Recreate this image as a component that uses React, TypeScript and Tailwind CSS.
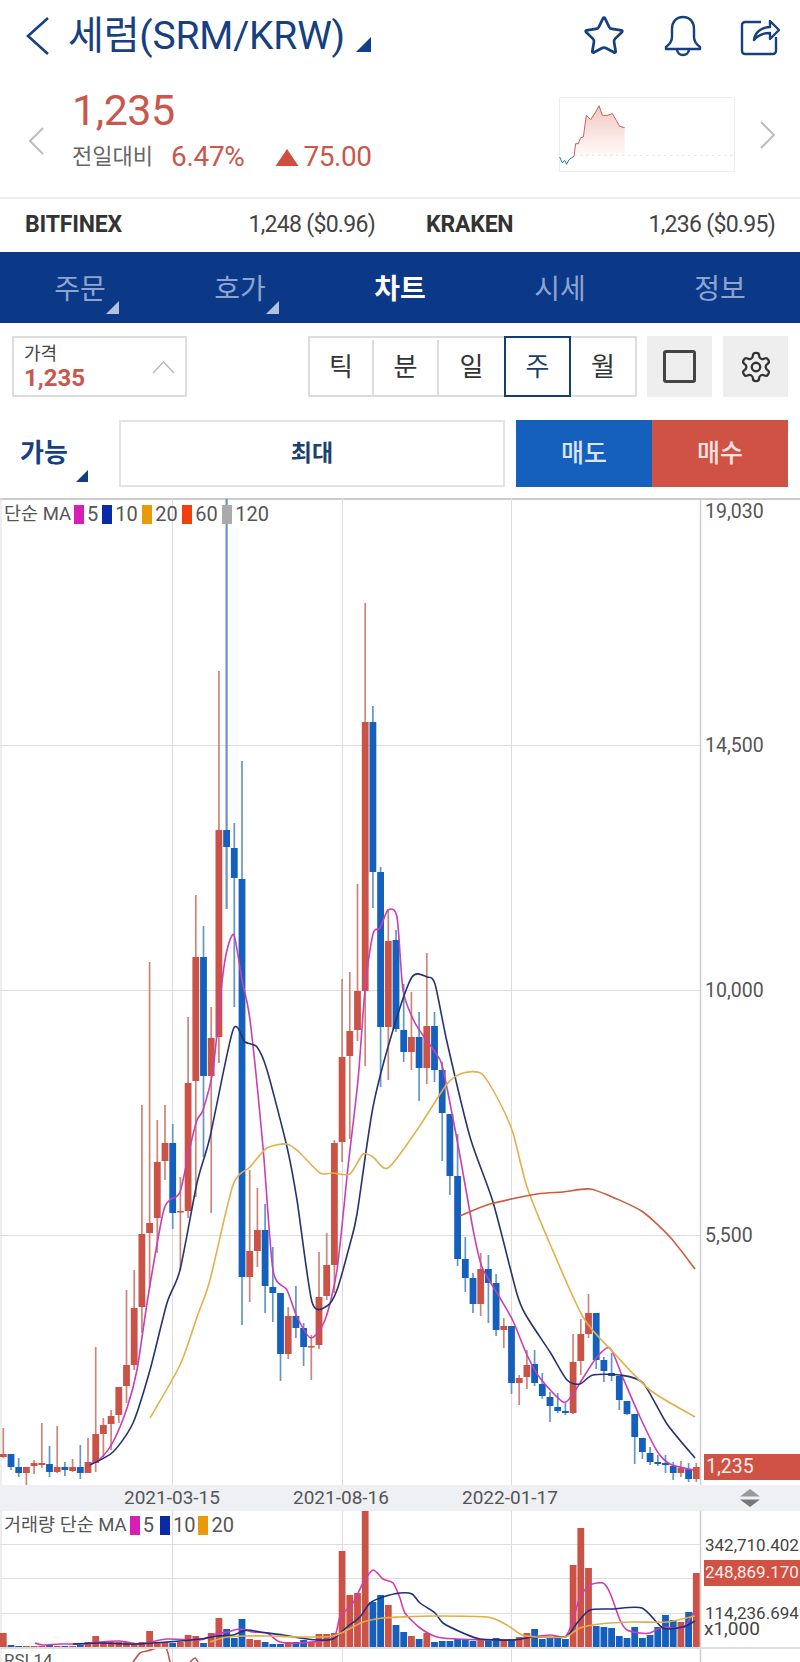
import React from 'react';
import { Star } from 'lucide-react';

const RED = '#cb5246';
const BLUE = '#1560bd';
const candleX = (i: number) => 3.3 + 7.7 * i;

// color, wick top, body top, body bottom, wick bottom
const candles: [string, number, number, number, number][] = [
  ['r', 1428, 1454, 1457, 1458], ['b', 1454, 1454, 1467, 1470], ['b', 1458, 1467, 1473, 1477], ['r', 1467, 1467, 1473, 1485],
  ['r', 1460, 1463, 1466, 1474], ['r', 1423, 1463, 1465, 1468], ['b', 1446, 1464, 1472, 1477], ['r', 1426, 1467, 1472, 1473],
  ['b', 1462, 1467, 1470, 1476], ['r', 1459, 1467, 1471, 1472], ['b', 1445, 1467, 1473, 1479], ['r', 1438, 1462, 1473, 1473],
  ['r', 1347, 1434, 1463, 1472], ['r', 1418, 1425, 1434, 1457], ['r', 1410, 1416, 1424, 1450], ['r', 1387, 1387, 1415, 1423],
  ['r', 1290, 1365, 1386, 1403], ['r', 1270, 1308, 1365, 1370], ['r', 1105, 1234, 1307, 1333], ['r', 962, 1223, 1233, 1288],
  ['r', 1120, 1162, 1218, 1253], ['r', 1105, 1143, 1161, 1180], ['b', 1124, 1143, 1213, 1229], ['r', 1177, 1211, 1212, 1270],
  ['r', 1017, 1083, 1211, 1218], ['r', 895, 957, 1081, 1197], ['b', 926, 957, 1076, 1157], ['r', 1007, 1038, 1076, 1213],
  ['r', 671, 830, 1037, 1063], ['b', 499, 830, 847, 909], ['b', 823, 848, 878, 1007], ['b', 761, 879, 1277, 1325],
  ['r', 1170, 1251, 1277, 1302], ['r', 1188, 1230, 1251, 1267], ['b', 1204, 1230, 1286, 1313], ['b', 1247, 1287, 1293, 1322],
  ['b', 1293, 1293, 1354, 1381], ['r', 1307, 1316, 1354, 1359], ['b', 1286, 1316, 1328, 1338], ['b', 1323, 1328, 1347, 1366],
  ['r', 1335, 1346, 1347, 1380], ['r', 1252, 1297, 1345, 1349], ['r', 1233, 1265, 1296, 1300], ['r', 1140, 1143, 1265, 1293],
  ['r', 979, 1057, 1142, 1162], ['r', 972, 1031, 1056, 1139], ['r', 884, 991, 1030, 1041], ['r', 603, 722, 991, 1066],
  ['b', 706, 722, 872, 908], ['b', 867, 872, 1027, 1087], ['r', 909, 941, 1027, 1080], ['b', 930, 940, 1029, 1032],
  ['b', 984, 1030, 1052, 1062], ['r', 992, 1037, 1052, 1070], ['b', 1012, 1037, 1068, 1101], ['r', 953, 1026, 1068, 1084],
  ['b', 1012, 1026, 1070, 1082], ['b', 1062, 1070, 1113, 1161], ['b', 1114, 1114, 1176, 1195], ['b', 1134, 1176, 1259, 1266],
  ['b', 1237, 1259, 1278, 1292], ['b', 1273, 1278, 1304, 1313], ['r', 1253, 1269, 1304, 1316], ['b', 1255, 1269, 1283, 1323],
  ['b', 1274, 1283, 1330, 1336], ['r', 1318, 1326, 1330, 1348], ['b', 1326, 1326, 1383, 1394], ['r', 1375, 1378, 1383, 1405],
  ['r', 1350, 1365, 1377, 1389], ['b', 1350, 1364, 1383, 1386], ['b', 1373, 1384, 1396, 1399], ['b', 1392, 1397, 1406, 1422],
  ['b', 1393, 1407, 1411, 1413], ['b', 1403, 1411, 1413, 1415], ['r', 1334, 1362, 1413, 1414], ['r', 1319, 1334, 1361, 1375],
  ['r', 1294, 1313, 1334, 1338], ['b', 1313, 1313, 1360, 1369], ['b', 1357, 1360, 1371, 1382], ['b', 1353, 1373, 1376, 1381],
  ['b', 1376, 1376, 1400, 1410], ['b', 1401, 1401, 1414, 1415], ['b', 1414, 1414, 1437, 1464], ['b', 1438, 1438, 1452, 1459],
  ['b', 1447, 1453, 1462, 1465], ['b', 1455, 1462, 1464, 1466], ['b', 1455, 1463, 1465, 1473], ['b', 1462, 1466, 1473, 1480],
  ['r', 1461, 1468, 1473, 1477], ['b', 1463, 1469, 1479, 1482], ['r', 1463, 1467, 1479, 1482],
];

const ma5 = '88,1465 100,1459 113,1442 127,1408 137,1370 148,1297 163,1213 170,1200 180,1192 190,1147 197,1120 203,1110 213,1070 222,982 227,950 234,935 242,980 250,1020 263,1147 273,1270 287,1290 297,1317 311,1338 325,1320 337,1270 348,1167 358,1080 365,990 373,934 380,928 388,910 397,917 403,990 413,1019 422,1034 437,1055 443,1069 458,1145 473,1229 482,1267 500,1298 513,1321 527,1355 540,1378 563,1402 573,1394 583,1378 597,1357 610,1348 623,1378 640,1417 657,1451 670,1464 693,1470';
const ma10 = '90,1465 113,1452 133,1423 150,1370 167,1303 180,1270 197,1183 210,1137 233,1030 245,1042 257,1047 267,1070 287,1147 297,1200 312,1302 327,1306 337,1290 350,1244 357,1214 373,1107 393,1030 412,977 427,977 435,984 447,1042 470,1137 493,1202 517,1294 527,1317 550,1352 567,1380 580,1384 593,1375 620,1375 643,1383 667,1424 695,1458';
const ma20 = '150,1418 180,1365 197,1317 210,1280 233,1185 250,1167 267,1148 287,1144 300,1153 320,1173 333,1173 350,1174 363,1154 373,1157 388,1168 417,1130 447,1084 463,1073 482,1074 500,1103 513,1133 527,1187 550,1244 583,1317 613,1352 650,1390 695,1417';
const ma60 = '460,1216 490,1204 537,1194 563,1192 590,1189 617,1199 643,1212 670,1237 695,1269';

// top of each volume bar, page y
const volumeTops = [
  1633, 1645, 1646, 1646, 1646, 1646, 1645, 1646, 1646, 1646, 1645, 1642, 1636, 1642, 1642, 1642, 1642, 1644, 1642, 1631,
  1642, 1642, 1643, 1642, 1635, 1636, 1643, 1633, 1618, 1629, 1638, 1619, 1639, 1640, 1642, 1644, 1644, 1642, 1642, 1640,
  1642, 1634, 1634, 1633, 1551, 1595, 1593, 1511, 1602, 1595, 1605, 1625, 1632, 1636, 1639, 1633, 1642, 1641, 1641, 1639,
  1640, 1641, 1640, 1640, 1638, 1640, 1639, 1637, 1633, 1629, 1639, 1638, 1638, 1639, 1565, 1528, 1568, 1626, 1627, 1628,
  1636, 1638, 1627, 1638, 1635, 1627, 1615, 1620, 1622, 1612, 1573,
];

const volMa5 = '35,1643 43,1645 60,1644 83,1644 100,1642 120,1641 140,1644 167,1639 200,1640 213,1635 227,1632 240,1629 253,1632 267,1633 280,1642 300,1643 333,1638 340,1617 353,1603 363,1583 373,1570 383,1579 393,1583 400,1598 405,1613 420,1628 437,1637 457,1639 483,1640 513,1640 533,1637 550,1635 565,1637 572,1623 580,1597 590,1585 603,1583 610,1593 620,1620 627,1630 640,1633 650,1633 663,1627 683,1628 695,1610';
const volMa10 = '73,1644 100,1643 133,1644 167,1642 200,1639 217,1636 233,1635 247,1630 260,1632 283,1635 300,1638 317,1640 333,1639 347,1627 360,1617 370,1603 383,1597 400,1593 412,1594 420,1603 435,1613 443,1623 463,1633 480,1639 513,1640 533,1637 565,1637 577,1623 590,1610 613,1609 642,1608 663,1628 683,1627 695,1621';
const volMa20 = '210,1642 227,1637 247,1636 267,1636 300,1637 333,1636 353,1627 363,1622 383,1618 400,1617 433,1616 487,1617 507,1625 522,1635 540,1637 565,1637 580,1628 600,1624 633,1622 667,1622 695,1616';

const sparkBlue = '482,470 490,488 497,480 503,492 510,478 525,468';
const sparkRed = '525,468 530,430 538,430 545,412 553,410 562,345 575,358 590,335 600,316 610,345 625,345 640,340 652,360 662,378 677,382';

// smooth the traced points so the averages don't look like straight segments
const smooth = (points: string) => {
  const p = points.split(' ').map((s) => s.split(',').map(Number));
  let d = `M${p[0][0]} ${p[0][1]}`;
  for (let i = 0; i < p.length - 1; i++) {
    const a = p[Math.max(i - 1, 0)];
    const b = p[i];
    const c = p[i + 1];
    const e = p[Math.min(i + 2, p.length - 1)];
    const k = 1 / 8;
    d += ` C${b[0] + (c[0] - a[0]) * k} ${b[1] + (c[1] - a[1]) * k} ${c[0] - (e[0] - b[0]) * k} ${c[1] - (e[1] - b[1]) * k} ${c[0]} ${c[1]}`;
  }
  return d;
};

const Corner = ({ className }: { className: string }) => (
  <svg className={className} viewBox="0 0 14 14">
    <polygon points="14,0 14,14 0,14" fill="currentColor" />
  </svg>
);

const Tab = ({ label, active, corner }: { label: string; active?: boolean; corner?: boolean }) => (
  <div className="relative flex flex-1 items-center justify-center pt-[5px]">
    <span className={active ? 'text-[28px] font-bold text-white' : 'text-[28px] text-[#8ca5d2]'}>{label}</span>
    {corner && <Corner className="absolute bottom-[9px] left-[106px] h-[13px] w-[13px] text-[#b4c2e0]" />}
  </div>
);

const Swatch = ({ color }: { color: string }) => <span className={`inline-block h-[19px] w-[10px] ${color}`} />;

const Sparkline = () => (
  <svg className="h-[75px] w-[176px] shrink-0" viewBox="480 290 528 225">
    <defs>
      <linearGradient id="spark" x1="0" y1="0" x2="0" y2="1">
        <stop offset="0" stopColor="#e98f84" stopOpacity="0.5" />
        <stop offset="1" stopColor="#e98f84" stopOpacity="0.03" />
      </linearGradient>
    </defs>
    <rect x="481" y="292" width="525" height="221" fill="none" stroke="#e5e5e5" strokeWidth="2" />
    <polygon points={`${sparkRed} 677,465 525,465`} fill="url(#spark)" />
    <line x1="525" y1="465" x2="1006" y2="465" stroke="#d8d8d8" strokeWidth="2" strokeDasharray="8 10" />
    <polyline points={sparkBlue} fill="none" stroke="#2b74b8" strokeWidth="3" />
    <polyline points={sparkRed} fill="none" stroke="#c4645a" strokeWidth="3" />
  </svg>
);

const Grid = ({ y1, y2, rows }: { y1: number; y2: number; rows: number[] }) => (
  <g stroke="#dddddd" strokeWidth="1">
    <line x1="1" y1={y1} x2="1" y2={y2} />
    <line x1="172.5" y1={y1} x2="172.5" y2={y2} />
    <line x1="342.5" y1={y1} x2="342.5" y2={y2} />
    <line x1="511.5" y1={y1} x2="511.5" y2={y2} />
    <line x1="700.5" y1={y1} x2="700.5" y2={y2} stroke="#cfcfcf" strokeWidth="1.5" />
    {rows.map((y) => (
      <line key={y} x1="0" y1={y + 0.5} x2="700" y2={y + 0.5} />
    ))}
  </g>
);

const Line = ({ points, color, width = 1.6 }: { points: string; color: string; width?: number }) => (
  <path d={smooth(points)} fill="none" stroke={color} strokeWidth={width} strokeLinejoin="round" />
);

const App: React.FC = () => {
  return (
    <div className="flex h-[1662px] w-[800px] flex-col overflow-hidden bg-white text-[#333] [font-family:Roboto,'Noto_Sans_CJK_KR',sans-serif]">
      {/* title */}
      <div className="flex h-[72px] shrink-0 items-center pl-[26px] pr-[20px] text-[#16407f]">
        <svg className="h-[38px] w-[24px]" viewBox="0 0 24 38" fill="none" stroke="currentColor" strokeWidth="2.6">
          <polyline points="22,1 2,19 22,37" />
        </svg>
        <span className="ml-[18px] text-[39px] leading-none tracking-[-0.2px]">세럼(SRM/KRW)</span>
        <Corner className="ml-[11px] mt-[16px] h-[15px] w-[15px] text-[#0f3f8c]" />
        <div className="ml-auto flex items-center gap-[38px]">
          <Star className="h-[44px] w-[44px]" strokeWidth={1.5} />
          <svg className="h-[42px] w-[38px]" viewBox="0 0 38 42" fill="none" stroke="currentColor" strokeWidth="2.4" strokeLinejoin="round">
            <path d="M19 2c-7 0-11 5-11 12v8c0 4-2 7-6 10v2h34v-2c-4-3-6-6-6-10v-8c0-7-4-12-11-12z" />
            <path d="M13 34c0 4 3 6 6 6s6-2 6-6" />
          </svg>
          <svg className="h-[40px] w-[40px]" viewBox="0 0 40 40" fill="none" stroke="currentColor" strokeWidth="2.4" strokeLinejoin="round">
            <path d="M21 6H5a3 3 0 0 0-3 3v26a3 3 0 0 0 3 3h28a3 3 0 0 0 3-3V21" />
            <path d="M14 24c1-8 8-13 16-13V5l9 9-9 9v-6c-7 0-12 2-16 7z" />
          </svg>
        </div>
      </div>

      {/* price */}
      <div className="flex h-[125px] shrink-0 items-center pl-[29px] pr-[25px]">
        <svg className="mt-[12px] h-[28px] w-[15px] shrink-0" viewBox="0 0 15 28" fill="none" stroke="#bdbdbd" strokeWidth="2">
          <polyline points="14,1 1,14 14,27" />
        </svg>
        <div className="ml-[28px] -mt-[9px] flex flex-col">
          <span className="text-[43px] leading-[50px] tracking-[-0.5px] text-[#c9574c]">1,235</span>
          <div className="mt-[4px] flex items-center text-[28px] leading-[36px] text-[#c9574c]">
            <span className="text-[22px] text-[#666]">전일대비</span>
            <span className="ml-[18px] tracking-[-0.3px]">6.47%</span>
            <svg className="ml-[30px] mr-[5px] h-[17px] w-[24px]" viewBox="0 0 23 17">
              <polygon points="11.5,0 23,17 0,17" fill="#cf4e40" />
            </svg>
            <span className="tracking-[-0.5px]">75.00</span>
          </div>
        </div>
        <div className="ml-auto flex items-center">
          <Sparkline />
          <svg className="ml-[25px] h-[28px] w-[15px] shrink-0" viewBox="0 0 15 28" fill="none" stroke="#bdbdbd" strokeWidth="2">
            <polyline points="1,1 14,14 1,27" />
          </svg>
        </div>
      </div>

      {/* exchanges */}
      <div className="flex h-[55px] shrink-0 items-center border-t-2 border-[#eeeeee] text-[23px]">
        <div className="flex w-[400px] items-center justify-between pl-[25px] pr-[25px]">
          <span className="font-bold tracking-[-0.2px] text-[#333]">BITFINEX</span>
          <span className="tracking-[-0.7px] text-[#444]">1,248 ($0.96)</span>
        </div>
        <div className="flex w-[400px] items-center justify-between pl-[26px] pr-[25px]">
          <span className="font-bold tracking-[-0.2px] text-[#333]">KRAKEN</span>
          <span className="tracking-[-0.7px] text-[#444]">1,236 ($0.95)</span>
        </div>
      </div>

      {/* tabs */}
      <div className="flex h-[71px] shrink-0 bg-[#0b3887]">
        <Tab label="주문" corner />
        <Tab label="호가" corner />
        <Tab label="차트" active />
        <Tab label="시세" />
        <Tab label="정보" />
      </div>

      {/* controls */}
      <div className="flex h-[61px] shrink-0 mt-[13px] pl-[12px] pr-[12px]">
        <div className="relative flex w-[175px] flex-col justify-center border-2 border-[#dddddd] pl-[10px]">
          <span className="text-[18px] leading-[22px] text-[#444]">가격</span>
          <span className="text-[24px] font-bold leading-[26px] text-[#c9574c]">1,235</span>
          <svg className="absolute right-[10px] top-[23px] h-[13px] w-[23px]" viewBox="0 0 23 13" fill="none" stroke="#bbbbbb" strokeWidth="1.6">
            <polyline points="1,12 11.5,1 22,12" />
          </svg>
        </div>
        <div className="ml-[121px] flex w-[329px] border-2 border-[#dddddd] pt-[2px] text-[26px] text-[#333]">
          <span className="flex w-[64px] items-center justify-center border-r-2 border-[#dddddd]">틱</span>
          <span className="flex w-[65px] items-center justify-center border-r-2 border-[#dddddd]">분</span>
          <span className="flex w-[65px] items-center justify-center">일</span>
          <span className="-mb-[2px] -mt-[4px] flex w-[67px] items-center justify-center border-2 border-[#153f73] pt-[2px] text-[#1d3f6e]">주</span>
          <span className="flex flex-1 items-center justify-center">월</span>
        </div>
        <div className="ml-[10px] flex w-[65px] items-center justify-center bg-[#eeeeee]">
          <span className="h-[33px] w-[33px] rounded-[3px] border-[3px] border-[#444]" />
        </div>
        <div className="ml-[11px] flex w-[65px] items-center justify-center bg-[#eeeeee]">
          <svg className="h-[34px] w-[34px]" viewBox="0 0 24 24" fill="none" stroke="#333" strokeWidth="1.6" strokeLinejoin="round">
            <path d="M12.22 2h-.44a2 2 0 0 0-2 2v.18a2 2 0 0 1-1 1.73l-.43.25a2 2 0 0 1-2 0l-.15-.08a2 2 0 0 0-2.73.73l-.22.38a2 2 0 0 0 .73 2.73l.15.1a2 2 0 0 1 1 1.72v.51a2 2 0 0 1-1 1.74l-.15.09a2 2 0 0 0-.73 2.73l.22.38a2 2 0 0 0 2.73.73l.15-.08a2 2 0 0 1 2 0l.43.25a2 2 0 0 1 1 1.73V20a2 2 0 0 0 2 2h.44a2 2 0 0 0 2-2v-.18a2 2 0 0 1 1-1.73l.43-.25a2 2 0 0 1 2 0l.15.08a2 2 0 0 0 2.73-.73l.22-.39a2 2 0 0 0-.73-2.73l-.15-.08a2 2 0 0 1-1-1.74v-.5a2 2 0 0 1 1-1.74l.15-.09a2 2 0 0 0 .73-2.73l-.22-.38a2 2 0 0 0-2.73-.73l-.15.08a2 2 0 0 1-2 0l-.43-.25a2 2 0 0 1-1-1.73V4a2 2 0 0 0-2-2z" />
            <circle cx="12" cy="12" r="3" />
          </svg>
        </div>
      </div>

      <div className="mt-[23px] flex h-[67px] shrink-0 pl-[20px] pr-[12px]">
        <div className="relative flex w-[99px] items-center">
          <span className="text-[26px] font-bold text-[#16407f]">가능</span>
          <Corner className="absolute bottom-[5px] left-[56px] h-[12px] w-[12px] text-[#0f3f8c]" />
        </div>
        <div className="flex w-[386px] items-center justify-center border-2 border-[#e3e3e3] pt-[1px] text-[23px] font-bold text-[#1d3f6e]">최대</div>
        <div className="ml-[11px] flex w-[136px] items-center justify-center bg-[#1560bd] text-[25px] font-medium text-[#dbe6f5]">매도</div>
        <div className="flex w-[136px] items-center justify-center bg-[#cf5245] text-[25px] font-medium text-[#f7e3e0]">매수</div>
      </div>

      {/* main chart */}
      <div className="relative mt-[11px] h-[987px] shrink-0 border-t-2 border-[#cccccc]">
        <svg className="absolute left-0 top-[-2px] h-[987px] w-[800px]" viewBox="0 498 800 987">
          <Grid y1={498} y2={1485} rows={[745, 990, 1235]} />
          {candles.map(([c, wt, bt, bb, wb], i) => (
            <g key={i}>
              <line x1={candleX(i)} x2={candleX(i)} y1={wt} y2={wb} stroke={c === 'r' ? '#cc8579' : '#6496c4'} strokeWidth={i === 29 ? 2.2 : 1.7} />
              <rect x={candleX(i) - 3.4} y={bt} width="6.8" height={Math.max(bb - bt, 1.5)} fill={c === 'r' ? RED : BLUE} />
            </g>
          ))}
          <Line points={ma5} color="#c93fb4" />
          <Line points={ma10} color="#27336f" />
          <Line points={ma20} color="#e3b04e" />
          <Line points={ma60} color="#cf5b3e" />
        </svg>
        <div className="absolute left-[4px] top-[2px] flex h-[24px] items-center gap-[3px] text-[18.5px] leading-none text-[#555]">
          <span>단순 MA</span>
          <Swatch color="bg-[#d81fb5]" />
          <span className="mr-[1px] text-[20px]">5</span>
          <Swatch color="bg-[#0b2aa5]" />
          <span className="mr-[1.5px] text-[20px]">10</span>
          <Swatch color="bg-[#e89b0a]" />
          <span className="mr-[1.5px] text-[20px]">20</span>
          <Swatch color="bg-[#f0400f]" />
          <span className="mr-[1.5px] text-[20px]">60</span>
          <Swatch color="bg-[#aaaaaa]" />
          <span className="text-[20px]">120</span>
        </div>
        <span className="absolute left-[705px] top-[2px] text-[19.5px] leading-[20px] text-[#555]">19,030</span>
        <span className="absolute left-[705px] top-[236px] text-[19.5px] leading-[20px] text-[#555]">14,500</span>
        <span className="absolute left-[705px] top-[481px] text-[19.5px] leading-[20px] text-[#555]">10,000</span>
        <span className="absolute left-[705px] top-[726px] text-[19.5px] leading-[20px] text-[#555]">5,500</span>
        <span className="absolute left-[704px] top-[954px] flex h-[26px] w-[96px] items-center bg-[#cf5245] pl-[2px] text-[19.5px] text-[#fbeeec]">1,235</span>
      </div>

      {/* date strip */}
      <div className="relative h-[26px] shrink-0 bg-[#eef0f4] text-[19px] leading-[26px] text-[#555]">
        <span className="absolute left-[124px]">2021-03-15</span>
        <span className="absolute left-[293px]">2021-08-16</span>
        <span className="absolute left-[462px]">2022-01-17</span>
        <svg className="absolute left-[740px] top-[4px] h-[18px] w-[20px]" viewBox="0 0 20 18">
          <polygon points="10,0 20,7.5 0,7.5" fill="#999" />
          <polygon points="0,10.5 20,10.5 10,18" fill="#777" />
        </svg>
      </div>

      {/* volume */}
      <div className="relative h-[136px] shrink-0">
        <svg className="absolute left-0 top-0 h-[136px] w-[800px]" viewBox="0 1511 800 136">
          <Grid y1={1511} y2={1647} rows={[1544, 1578, 1613]} />
          {volumeTops.map((top, i) => (
            <rect key={i} x={candleX(i) - 3.4} y={top} width="6.8" height={1647 - top} fill={candles[i][0] === 'r' ? RED : BLUE} />
          ))}
          <Line points={volMa5} color="#d23cb0" />
          <Line points={volMa10} color="#1f2f7a" />
          <Line points={volMa20} color="#e3ad45" />
        </svg>
        <div className="absolute left-[4px] top-[2px] flex h-[24px] items-center gap-[3px] text-[18.5px] leading-none text-[#555]">
          <span>거래량 단순 MA</span>
          <Swatch color="bg-[#d81fb5]" />
          <span className="mr-[3px] text-[20px]">5</span>
          <Swatch color="bg-[#0b2aa5]" />
          <span className="text-[20px]">10</span>
          <Swatch color="bg-[#e89b0a]" />
          <span className="text-[20px]">20</span>
        </div>
        <span className="absolute left-[705px] top-[26px] whitespace-nowrap text-[17px] leading-[16px] text-[#444]">342,710.402</span>
        <span className="absolute left-[704px] top-[49px] flex h-[26px] w-[96px] items-center overflow-hidden whitespace-nowrap bg-[#cf5245] pl-[1px] text-[17px] text-[#fbeeec]">248,869.170</span>
        <span className="absolute left-[705px] top-[94px] whitespace-nowrap text-[17px] leading-[16px] text-[#444]">114,236.694</span>
        <span className="absolute left-[704px] top-[110px] text-[19px] leading-[16px] text-[#444]">x1,000</span>
      </div>

      {/* rsi */}
      <div className="relative flex-1 overflow-hidden border-t-2 border-[#dddddd]">
        <svg className="absolute left-0 top-[-2px] h-[15px] w-[800px]" viewBox="0 1647 800 15">
          <Grid y1={1647} y2={1662} rows={[]} />
          <Line points="133,1662 140,1653 147,1651 165,1647 170,1662" color="#c4564a" />
          <Line points="190,1662 195,1658 198,1662" color="#c4564a" />
        </svg>
        <span className="absolute left-[4px] top-[1px] text-[17px] leading-[20px] text-[#555]">RSI 14</span>
      </div>
    </div>
  );
};

export default App;
